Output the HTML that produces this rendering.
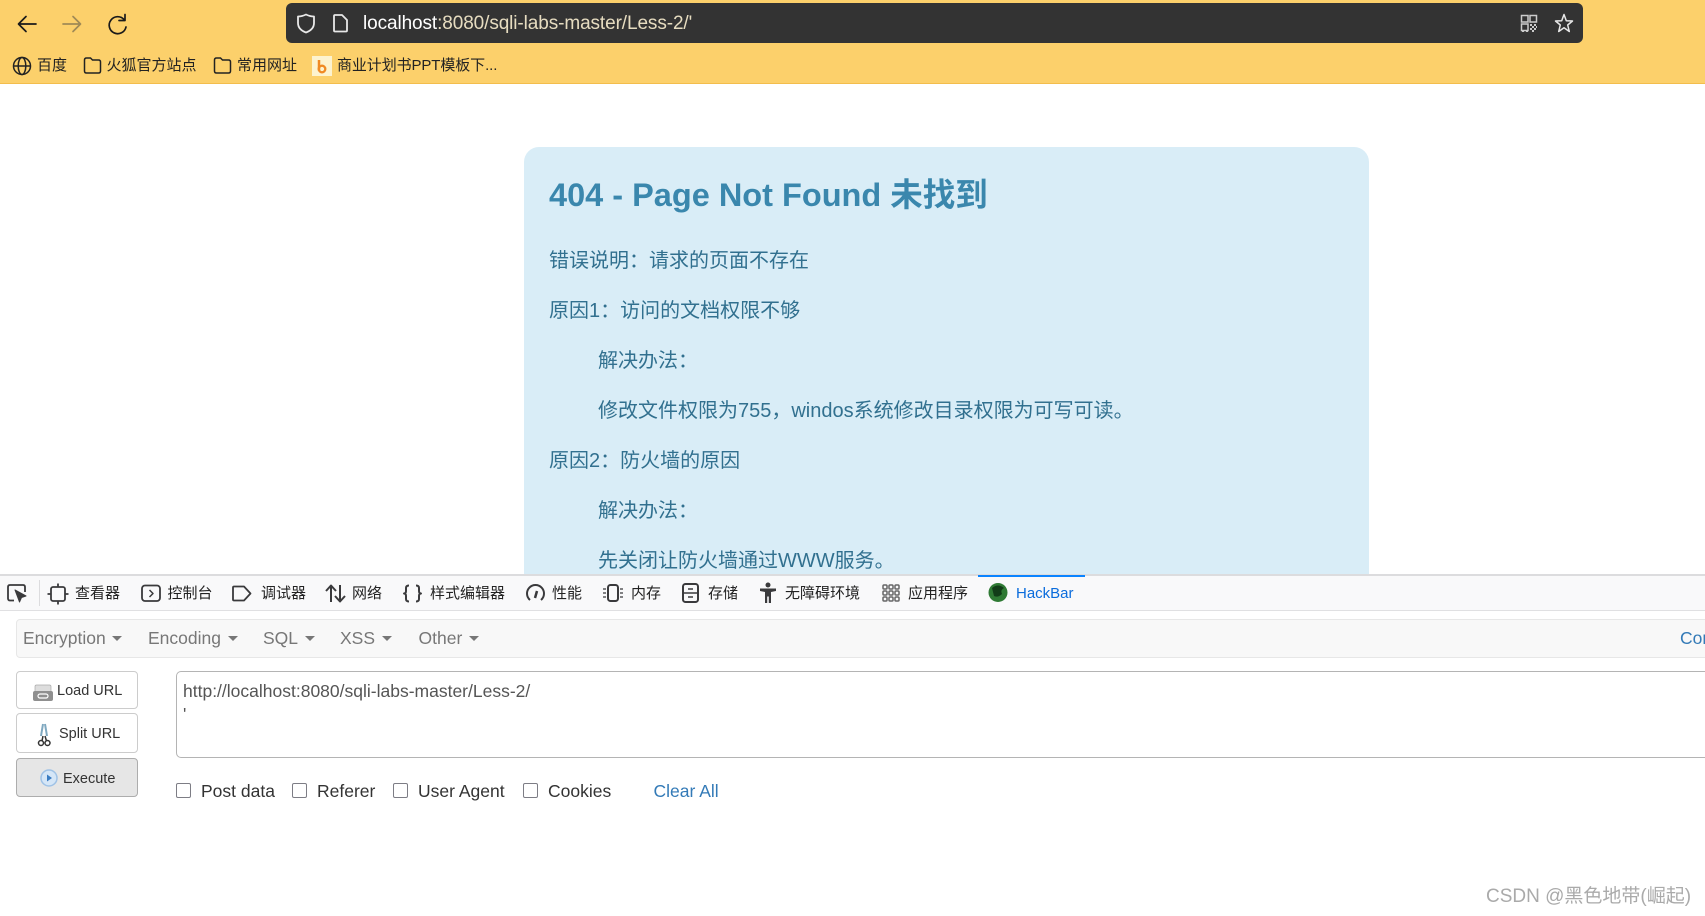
<!DOCTYPE html>
<html lang="zh"><head><meta charset="utf-8"><title>404</title>
<style>
html,body{margin:0;padding:0;width:1705px;height:916px;overflow:hidden;background:#fff}
body{position:relative;font-family:"Liberation Sans","Noto Sans CJK SC",sans-serif}
div,span,a{position:absolute;white-space:nowrap}
.b{font-size:15px;line-height:20px;top:56px;color:#222}
.p{font-size:20px;line-height:28px;color:#31708f;left:549px}
.i{left:598px}
.t{font-size:15px;line-height:20px;top:584px;color:#222}
.m{font-size:17.5px;line-height:24px;top:626px;color:#777}
.c{border-top:5px solid #777;border-left:5px solid transparent;border-right:5px solid transparent;top:636px;width:0;height:0}
.btn{left:16px;width:120px;background:#fff;border:1px solid #ccc;border-radius:4px;box-sizing:content-box}
.bt{font-size:14.5px;line-height:20px;color:#333}
.cb{width:13px;height:13px;border:1.5px solid #7d7d85;border-radius:2px;background:#fff;top:783px}
.l{font-size:17.5px;line-height:24px;top:779px;color:#333}
</style></head><body>

<div style="left:0;top:0;width:1705px;height:83px;background:#fcd06b;border-bottom:1px solid #f3bd4c"></div>
<div style="left:286px;top:3px;width:1297px;height:40px;background:#333;border-radius:6px"></div>
<div style="left:363px;top:12px;font-size:19px;line-height:24px;color:#fff;letter-spacing:-.1px">localhost<span style="position:static;color:#e6dcc0">:8080/sqli-labs-master/Less-2/'</span></div>

<div class="b" style="left:37px">百度</div>
<div class="b" style="left:106.5px">火狐官方站点</div>
<div class="b" style="left:237px">常用网址</div>
<div class="b" style="left:337px;letter-spacing:-.1px">商业计划书PPT模板下...</div>

<div style="left:524px;top:147px;width:845px;height:460px;background:#d9edf7;border-radius:15px 15px 0 0"></div>
<div style="left:549px;top:174px;font-size:32.5px;line-height:42px;font-weight:bold;color:#3a87ad">404 - Page Not Found 未找到</div>
<div class="p" style="top:247px">错误说明：请求的页面不存在</div>
<div class="p" style="top:297px">原因1：访问的文档权限不够</div>
<div class="p i" style="top:347px">解决办法：</div>
<div class="p i" style="top:397px">修改文件权限为755，windos系统修改目录权限为可写可读。</div>
<div class="p" style="top:447px">原因2：防火墙的原因</div>
<div class="p i" style="top:497px">解决办法：</div>
<div class="p i" style="top:547px">先关闭让防火墙通过WWW服务。</div>

<div style="left:0;top:574px;width:1705px;height:342px;background:#fff"></div>
<div style="left:0;top:574px;width:1705px;height:37px;background:#f9f9fa;border-top:2px solid #dcdcde;border-bottom:1px solid #e0e0e2;box-sizing:border-box"></div>
<div style="left:39px;top:580px;width:1px;height:26px;background:#dcdcde"></div>
<div style="left:978px;top:575px;width:107px;height:2px;background:#0a84ff"></div>
<div class="t" style="left:75px">查看器</div>
<div class="t" style="left:167.5px">控制台</div>
<div class="t" style="left:261px">调试器</div>
<div class="t" style="left:352px">网络</div>
<div class="t" style="left:430px">样式编辑器</div>
<div class="t" style="left:552px">性能</div>
<div class="t" style="left:631px">内存</div>
<div class="t" style="left:708px">存储</div>
<div class="t" style="left:785px">无障碍环境</div>
<div class="t" style="left:908px">应用程序</div>
<div class="t" style="left:1016px;color:#0a6cdc">HackBar</div>

<div style="left:16px;top:619px;width:1700px;height:37px;background:#f8f8f8;border:1px solid #e7e7e7;border-radius:4px"></div>
<div class="m" style="left:23px">Encryption</div><div class="c" style="left:112px"></div>
<div class="m" style="left:148px">Encoding</div><div class="c" style="left:228px"></div>
<div class="m" style="left:263px">SQL</div><div class="c" style="left:305px"></div>
<div class="m" style="left:340px">XSS</div><div class="c" style="left:382px"></div>
<div class="m" style="left:418.500px">Other</div><div class="c" style="left:469px"></div>
<div class="m" style="left:1680px;color:#337ab7">Contact</div>

<div class="btn" style="top:671px;height:36px"></div>
<div class="bt" style="left:57px;top:681px">Load URL</div>
<div class="btn" style="top:713px;height:38px"></div>
<div class="bt" style="left:59px;top:724px">Split URL</div>
<div class="btn" style="top:758px;height:37px;background:#e6e6e6;border-color:#adadad"></div>
<div class="bt" style="left:63px;top:769px">Execute</div>

<div style="left:176px;top:671px;width:1600px;height:85px;border:1px solid #b4b4b4;border-radius:5px;background:#fff"></div>
<div style="left:183px;top:679px;font-size:17.5px;line-height:24px;color:#555">http://localhost:8080/sqli-labs-master/Less-2/</div>
<div style="left:183px;top:702px;font-size:17.5px;line-height:24px;color:#555">'</div>

<div class="cb" style="left:176px"></div><div class="l" style="left:201px">Post data</div>
<div class="cb" style="left:292px"></div><div class="l" style="left:317px">Referer</div>
<div class="cb" style="left:393px"></div><div class="l" style="left:418px">User Agent</div>
<div class="cb" style="left:523px"></div><div class="l" style="left:548px">Cookies</div>
<div class="l" style="left:653.5px;color:#337ab7">Clear All</div>

<div style="left:1486px;top:884px;font-size:19px;line-height:26px;color:#aaa">CSDN @黑色地带(崛起)</div>

<svg width="1705" height="916" viewBox="0 0 1705 916" style="position:absolute;left:0;top:0" fill="none">
<!-- nav -->
<g stroke="#1a1a1a" stroke-width="1.700" stroke-linecap="round" stroke-linejoin="round">
<path d="M19 24H36M26 16.500L18.500 24L26 31.500"/>
<path d="M63 24H80M73 16.500L80.500 24L73 31.500" stroke="#a08a55"/>
<path d="M124 19.500A8.500 8.500 0 1 0 126 27"/><path d="M125 14.500V20.500H119"/>
</g>
<!-- url icons -->
<g stroke="#e8e8e8" stroke-width="1.800" stroke-linejoin="round">
<path d="M306 14.500C303 16 300 16.500 298 16.500V23C298 28 302 31 306 32.500C310 31 314 28 314 23V16.500C312 16.500 309 16 306 14.500Z"/>
<path d="M335 15H342L347 20V30.500Q347 31.500 346 31.500H335Q334 31.500 334 30.500V16Q334 15 335 15Z"/>
<path d="M1564 14.500L1566.300 20.700L1572.500 21L1567.700 25L1569.300 31.500L1564 27.800L1558.700 31.500L1560.300 25L1555.500 21L1561.700 20.700Z" stroke-width="1.500"/>
</g>
<g stroke="#ccc" stroke-width="1.500">
<rect x="1521.500" y="15.500" width="6.500" height="6.500"/><rect x="1530" y="15.500" width="6.500" height="6.500"/><rect x="1521.500" y="24" width="6.500" height="6.500"/>
</g>
<path d="M1530 24h2v2h-2zM1534 24h2v2h-2zM1532 26h2v2h-2zM1536 26h1v2h-1zM1530 28h2v2h-2zM1534 28h2v2h-2zM1532 30h2v2h-2zM1522 31h2v1h-2zM1526 31h2v1h-2z" fill="#ccc"/>
<!-- bookmarks -->
<g stroke="#222" stroke-width="1.500">
<circle cx="22" cy="66" r="8.500"/><ellipse cx="22" cy="66" rx="3.800" ry="8.500"/><path d="M13.500 66H30.500"/>
<path d="M84.500 60Q84.500 58 86.500 58H90.500L92.500 60H98.500Q100.500 60 100.500 62V71Q100.500 73 98.500 73H86.500Q84.500 73 84.500 71Z"/>
<path d="M214.500 60Q214.500 58 216.500 58H220.500L222.500 60H228.500Q230.500 60 230.500 62V71Q230.500 73 228.500 73H216.500Q214.500 73 214.500 71Z"/>
</g>
<rect x="312" y="56" width="20" height="20" fill="#fdf3cf"/>
<path d="M319 60V70.500" stroke="#f08a24" stroke-width="2.500"/><circle cx="322" cy="69" r="3.300" stroke="#f08a24" stroke-width="2.300"/>
<!-- devtools icons -->
<g stroke="#3a3a3c" stroke-width="1.800" stroke-linejoin="round">
<path d="M14 600.500H10Q8 600.500 8 598.500V587Q8 585 10 585H23Q25 585 25 587V592"/>
<path d="M15 590L26 596L21.500 597.500L19.500 602Z" fill="#3a3a3c" stroke-width="1"/>
<rect x="51" y="587" width="14" height="14" rx="2"/><path d="M58 583.500V587M58 601V604.500M47.500 594H51M65 594H68.500"/>
<rect x="142" y="585.500" width="18" height="15.500" rx="3"/><path d="M149.500 590L153 593.500L149.500 597" stroke-width="1.500"/>
<path d="M234 586.500H244L250.500 593.500L244 600.500H234Q233 600.500 233 599.500V587.500Q233 586.500 234 586.500Z"/>
<path d="M331 602V586M326 591L331 585.500L336 591M340 585V601M335 596L340 601.500L345 596" stroke-width="2"/>
<path d="M409 585.500Q406 585.500 406 588V591Q406 593.500 404 593.500Q406 593.500 406 596V599Q406 601.500 409 601.500M416 585.500Q419 585.500 419 588V591Q419 593.500 421 593.500Q419 593.500 419 596V599Q419 601.500 416 601.500" stroke-width="2"/>
<path d="M530 600A8.500 8.500 0 1 1 541 600" stroke-width="2"/><path d="M537 591L535 598" stroke-width="2.500"/>
<rect x="608" y="585" width="10" height="16" rx="2.500" stroke-width="2"/><path d="M603 589H606M603 593H606M603 597H606M620 589H623M620 593H623M620 597H623" stroke-width="1.300"/>
<rect x="683" y="584" width="15" height="18" rx="2.500" stroke-width="2"/><path d="M683 593H698M688 589H693M688 597H693" stroke-width="1.500"/>
</g>
<g fill="#3a3a3c">
<circle cx="768" cy="585" r="2.500"/><path d="M760 588.500H776V591L771 592V603H768.800V596.500H767.200V603H765V592L760 591Z"/>
</g>
<g stroke="#666" stroke-width="1.500">
<rect x="883" y="585" width="4" height="4" rx="1"/><rect x="889" y="585" width="4" height="4" rx="1"/><rect x="895" y="585" width="4" height="4" rx="1"/>
<rect x="883" y="591" width="4" height="4" rx="1"/><rect x="889" y="591" width="4" height="4" rx="1"/><rect x="895" y="591" width="4" height="4" rx="1"/>
<rect x="883" y="597" width="4" height="4" rx="1"/><rect x="889" y="597" width="4" height="4" rx="1"/><rect x="895" y="597" width="4" height="4" rx="1"/>
</g>
<circle cx="998" cy="592.500" r="9.500" fill="#2f7a34"/><path d="M992 588Q998 583 1004 588Q1000 590 1002 594Q998 598 994 596" fill="#123d18"/>
<!-- button icons -->
<rect x="35" y="685" width="16" height="9" rx="1.500" fill="#ddd" stroke="#aaa" stroke-width=".7"/>
<path d="M33 693Q33 691 35 691H51Q53 691 53 693V699Q53 701 51 701H35Q33 701 33 699Z" fill="#8f8f8f"/><rect x="38" y="694" width="10" height="4" rx="2" stroke="#fff" stroke-width="1.200"/>
<path d="M43 724L41 736M45 724L47 736" stroke="#7fa8c0" stroke-width="2"/>
<circle cx="41" cy="743" r="2.500" stroke="#333" stroke-width="1.500"/><circle cx="47.500" cy="743" r="2.500" stroke="#333" stroke-width="1.500"/>
<path d="M42 741L43 736M46.500 741L45 736" stroke="#333" stroke-width="1.500"/>
<circle cx="49" cy="778" r="8" fill="#d5e6f7" stroke="#9fc2e6" stroke-width="1.500"/><path d="M47 774.500L52 778L47 781.500Z" fill="#3a7cc2"/>
</svg>
</body></html>
